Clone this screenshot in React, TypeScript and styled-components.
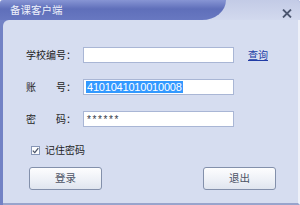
import styled, { createGlobalStyle } from 'styled-components';

const GlobalStyle = createGlobalStyle`
    html, body {
        margin: 0;
        padding: 0;
        background: #ffffff;
    }
    body {
        font-family: "Noto Sans CJK SC", "Liberation Sans", sans-serif;
    }
`;

const cjk = `"Noto Sans CJK SC", "Liberation Sans", sans-serif`;

const LoginWindow = () => {
    return (
        <>
            <GlobalStyle />
            <Frame>
                <TitleBar>
                    <TitleTab>
                        <TitleText>备课客户端</TitleText>
                    </TitleTab>
                    <CloseButton aria-label="close">
                        <svg width="10" height="9" viewBox="0 0 10 9">
                            <path d="M1 0.5 L9 8.5 M9 0.5 L1 8.5" stroke="#4b5670" strokeWidth="1.8" fill="none" />
                        </svg>
                    </CloseButton>
                </TitleBar>
                <Body>
                    <FormGrid>
                        <Label>学校编号：</Label>
                        <Field />
                        <QueryLink href="#">查询</QueryLink>

                        <Label>账　　号：</Label>
                        <Field>
                            <Selected>4101041010010008</Selected>
                        </Field>
                        <span />

                        <Label>密　　码：</Label>
                        <Field>
                            <Masked>******</Masked>
                        </Field>
                        <span />
                    </FormGrid>

                    <RememberRow>
                        <CheckBox>
                            <svg width="7" height="7" viewBox="0 0 7 7">
                                <path d="M0.8 3.6 L2.8 5.6 L6.3 1.2" stroke="#4a5468" strokeWidth="1.3" fill="none" />
                            </svg>
                        </CheckBox>
                        <RememberText>记住密码</RememberText>
                    </RememberRow>

                    <ButtonRow>
                        <ActionButton>登录</ActionButton>
                        <ActionButton>退出</ActionButton>
                    </ButtonRow>
                </Body>
            </Frame>
        </>
    );
};

const Frame = styled.div`
    width: 300px;
    height: 205px;
    display: flex;
    flex-direction: column;
    background: #7282c5;
    border-radius: 3px 3px 0 0;
    overflow: hidden;
`;

const TitleBar = styled.div`
    height: 20px;
    display: flex;
    align-items: stretch;
    background: linear-gradient(#c3cbe6, #d2d9ee);
    flex-shrink: 0;
`;

const TitleTab = styled.div`
    width: 226px;
    display: flex;
    align-items: center;
    padding-left: 10px;
    box-sizing: border-box;
    background: linear-gradient(#8795d4 0%, #5f6fba 45%, #6878c1 100%);
    border-top-left-radius: 3px;
    border-bottom-right-radius: 24px 20px;
`;

const TitleText = styled.span`
    font-family: ${cjk};
    font-size: 10.5px;
    color: #eef1fb;
    letter-spacing: 0;
    line-height: 1;
    margin-top: 1px;
`;

const CloseButton = styled.div`
    margin-left: auto;
    margin-right: 8px;
    display: flex;
    align-items: center;
    padding-top: 6px;
`;

const Body = styled.div`
    flex: 1;
    margin-left: 3px;
    background: #d6ddf0;
    border-top-left-radius: 6px;
    border-right: 2px solid #eef1f9;
    border-bottom: 2px solid #98a4cc;
    padding: 27px 22px 0 23px;
    display: flex;
    flex-direction: column;
`;

const FormGrid = styled.div`
    display: grid;
    grid-template-columns: 57px 151px auto;
    grid-auto-rows: 16px;
    row-gap: 16px;
    align-items: center;
`;

const Label = styled.span`
    font-family: ${cjk};
    font-size: 10px;
    color: #1e1e24;
    line-height: 1;
    white-space: nowrap;
`;

const Field = styled.div`
    height: 16px;
    box-sizing: border-box;
    background: #ffffff;
    border: 1px solid #a9b6d5;
    display: flex;
    align-items: center;
    padding-left: 2px;
    overflow: hidden;
`;

const Selected = styled.span`
    font-family: "Liberation Sans", sans-serif;
    font-size: 11px;
    letter-spacing: -0.2px;
    line-height: 12px;
    color: #ffffff;
    background: #3399ff;
    padding: 0 1px;
`;

const Masked = styled.span`
    font-family: "Liberation Sans", sans-serif;
    font-size: 10px;
    letter-spacing: 1.6px;
    color: #333a48;
    line-height: 10px;
    margin-top: 2px;
    padding-left: 1px;
`;

const QueryLink = styled.a`
    font-family: ${cjk};
    font-size: 10px;
    line-height: 1;
    color: #213ca6;
    text-decoration: underline;
    margin-left: 14px;
    margin-top: -1px;
`;

const RememberRow = styled.div`
    display: flex;
    align-items: center;
    gap: 5px;
    margin-top: 18px;
    padding-left: 5px;
`;

const CheckBox = styled.span`
    width: 9px;
    height: 9px;
    box-sizing: border-box;
    border: 1px solid #8796b6;
    background: #fbfcfe;
    display: flex;
    align-items: center;
    justify-content: center;
`;

const RememberText = styled.span`
    font-family: ${cjk};
    font-size: 10px;
    line-height: 1;
    color: #1e1e24;
`;

const ButtonRow = styled.div`
    display: flex;
    justify-content: space-between;
    margin-top: 12px;
    padding-left: 3px;
`;

const ActionButton = styled.button`
    width: 73px;
    height: 23px;
    padding: 0;
    border: 1px solid #8390ab;
    border-radius: 3px;
    background: linear-gradient(#fdfdfe 0%, #eef1f7 55%, #e0e5ef 100%);
    font-family: ${cjk};
    font-size: 10.5px;
    color: #4d5466;
    line-height: 1;
`;

export default LoginWindow;
